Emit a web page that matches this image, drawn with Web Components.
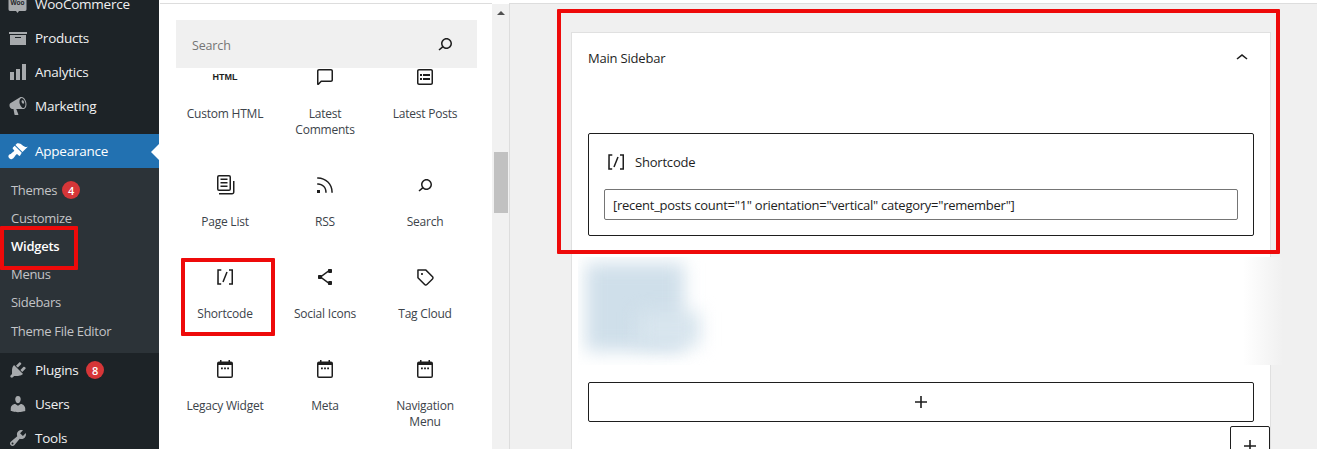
<!DOCTYPE html>
<html lang="en">
<head>
<meta charset="utf-8">
<title>Widgets</title>
<style>
  html, body { margin: 0; height: 449px; overflow: hidden; background: #fff; }
  body { font-family: "Open Sans", "Noto Sans", sans-serif; font-size: 13px; }
  wp-screen { display: flex; height: 449px; }
</style>
</head>
<body>
<template id="tpl-menu-row">
  <style>
    :host { display: flex; align-items: center; height: 34px; color: #f0f0f1; font-size: 13.5px; letter-spacing: -.25px; }
    :host([current]) { background: #2271b1; color: #fff; position: relative; }
    :host([current])::after { content: ""; position: absolute; right: 0; top: 10px; border: 8px solid transparent; border-right-color: #fff; border-left: 0; }
    .ic { width: 20px; height: 20px; margin: 0 7px 0 8px; flex: none; fill: #a7aaad; }
    :host([current]) .ic { fill: #fff; }
    ::slotted(svg) { width: 20px; height: 20px; fill: #a7aaad; }
    :host([current]) ::slotted(svg) { fill: #fff; }
  </style>
  <span class="ic"><slot name="icon"></slot></span><span><slot></slot></span>
</template>
<template id="tpl-badge">
  <style>
    :host { display: inline-flex; align-items: center; justify-content: center; width: 18px; height: 18px; border-radius: 50%; background: #d63638; color: #fff; font-size: 11px; font-weight: 600; letter-spacing: 0; }
  </style>
  <slot></slot>
</template>
<template id="tpl-sub-row">
  <style>
    :host { display: flex; align-items: center; height: 28px; padding-left: 11px; color: #c3c4c7; font-size: 13px; letter-spacing: -.3px; gap: 5px; }
    :host([current]) { color: #fff; font-weight: 600; letter-spacing: -.25px; }
  </style>
  <slot></slot>
</template>
<template id="tpl-sidebar">
  <style>
    :host { display: block; width: 159px; flex: none; background: #1d2327; height: 449px; overflow: hidden; margin-right: 1px; }
    .top { margin-top: -13px; }
    .gap { height: 11px; }
    .sub { background: #2c3338; padding: 8px 0; height: 169px; }
  </style>
  <div class="top"><slot name="top"></slot></div>
  <div class="gap"></div>
  <slot name="current"></slot>
  <div class="sub"><slot name="sub"></slot></div>
  <slot name="bottom"></slot>
</template>
<template id="tpl-search">
  <style>
    :host { display: flex; align-items: center; justify-content: space-between; height: 48px; background: #f0f0f0; padding: 0 20px 0 16px; color: #757575; font-size: 12.5px; letter-spacing: -.15px; position: relative; z-index: 1; }
    span { padding-top: 2px; }
    svg { width: 24px; height: 24px; fill: #1e1e1e; }
  </style>
  <span><slot></slot></span>
  <svg viewBox="0 0 24 24"><path d="M13.5 6C10.5 6 8 8.5 8 11.5c0 1.1.3 2.1.9 3l-3.4 3 1 1.1 3.4-2.9c1 .9 2.2 1.4 3.6 1.4 3 0 5.5-2.5 5.5-5.5C19 8.5 16.5 6 13.5 6zm0 9.5c-2.2 0-4-1.8-4-4s1.8-4 4-4 4 1.8 4 4-1.8 4-4 4z"/></svg>
</template>
<template id="tpl-block-item">
  <style>
    :host { display: flex; flex-direction: column; align-items: center; text-align: center; width: 100px; color: #1e1e1e; font-size: 12px; line-height: 16px; letter-spacing: -.22px; }
    .ic { height: 24px; width: 24px; margin-bottom: 17px; display: flex; align-items: center; justify-content: center; }
    ::slotted(svg) { width: 24px; height: 24px; fill: #1e1e1e; }
    .lb { color: #3c434a; width: 80px; }
  </style>
  <div class="ic"><slot name="icon"></slot></div>
  <div class="lb"><slot></slot></div>
</template>
<template id="tpl-inserter">
  <style>
    :host { display: flex; width: 332px; flex: none; height: 446px; margin-top: 3px; border-top: 1px solid #ddd; box-sizing: border-box; overflow: hidden; }
    .pane { width: 332px; padding: 16px 15px 0 16px; box-sizing: border-box; }
    .grid { display: grid; grid-template-columns: repeat(3, 100px); row-gap: 35px; margin: -3px 0 0 -1px; }
  </style>
  <div class="pane">
    <slot name="search"></slot>
    <div class="grid"><slot></slot></div>
  </div>
</template>
<template id="tpl-scrollbar">
  <style>
    :host { display: flex; flex-direction: column; align-items: center; width: 17px; flex: none; height: 445px; margin-top: 4px; background: #f1f1f1; }
    .arrow { margin-top: 7px; border: 4px solid transparent; border-top: 0; border-bottom: 4px solid #505050; }
    .thumb { width: 14px; height: 61px; background: #c1c1c1; margin-top: 137px; }
  </style>
  <div class="arrow"></div><div class="thumb"></div>
</template>
<template id="tpl-canvas">
  <style>
    :host { display: block; flex: 1; height: 446px; margin-top: 3px; background: #f0f0f0; border-top: 1px solid #ddd; border-left: 1px solid #ddd; box-sizing: border-box; padding: 28px 46px 0 61px; overflow: hidden; position: relative; }
  </style>
  <slot></slot>
</template>
<template id="tpl-area">
  <style>
    :host { display: block; position: relative; background: #fff; border: 1px solid #e0e0e0; padding: 0 16px; height: 500px; }
    header { display: flex; align-items: center; justify-content: space-between; height: 50px; color: #1e1e1e; font-size: 13px; letter-spacing: -.2px; margin-bottom: 50px; }
    svg { width: 24px; height: 24px; fill: #1e1e1e; }
  </style>
  <header><span><slot name="title"></slot></span><svg viewBox="0 0 24 24"><path d="M6.5 12.4L12 8l5.5 4.4-.9 1.2L12 10l-4.5 3.6-1-1.2z"/></svg></header>
  <slot></slot>
</template>
<template id="tpl-shortcode">
  <style>
    :host { display: block; border: 1px solid #1e1e1e; border-radius: 2px; height: 103px; box-sizing: border-box; padding: 16px 15px 0; color: #1e1e1e; }
    .head { display: flex; align-items: center; gap: 7px; height: 24px; margin-bottom: 15px; font-size: 13px; letter-spacing: -.2px; }
    svg { width: 24px; height: 24px; fill: #1e1e1e; }
    .field { border: 1px solid #757575; border-radius: 2px; height: 31px; box-sizing: border-box; display: flex; align-items: center; padding: 1px 0 0 8px; font-size: 13px; letter-spacing: -.26px; white-space: nowrap; }
  </style>
  <div class="head"><svg viewBox="0 0 24 24"><path d="M16 4.2v1.500h2.500v12.500H16v1.500h4V4.2h-4zM4.2 19.800h4v-1.500H5.800V5.800h2.500V4.200h-4l-.1 15.600zm5.100-3.100l1.400.6 4-10-1.400-.6-4 10z"/></svg><span><slot name="title"></slot></span></div>
  <div class="field"><slot></slot></div>
</template>
<template id="tpl-blurred">
  <style>
    :host { display: block; position: relative; height: 146px; }
    .fade { position: absolute; left: -10px; right: -29px; top: 21px; height: 108px; background: linear-gradient(to right, #fff calc(100% - 40px), #f0f0f0 100%); overflow: hidden; }
    .blob { position: absolute; left: 8px; top: 6px; width: 98px; height: 88px; background: #cfdfea; filter: blur(9px); }
    .blob2 { position: absolute; left: 60px; top: 55px; width: 62px; height: 34px; background: #d8e5ee; filter: blur(9px); }
  </style>
  <div class="fade"><div class="blob"></div><div class="blob2"></div></div>
</template>
<template id="tpl-appender">
  <style>
    :host { display: flex; align-items: center; justify-content: center; box-sizing: border-box; height: 40px; border: 1px solid #1e1e1e; border-radius: 2px; background: #fff; }
    svg { width: 24px; height: 24px; fill: #1e1e1e; }
  </style>
  <svg viewBox="0 0 24 24"><path d="M18 11.2h-5.2V6h-1.6v5.2H6v1.6h5.2V18h1.6v-5.2H18z"/></svg>
</template>
<template id="tpl-annotation">
  <style>
    :host { position: absolute; box-sizing: border-box; border: 4px solid #ee0a0a; border-radius: 1px; pointer-events: none; }
  </style>
</template>
<template id="tpl-screen">
  <style>
    :host { display: flex; height: 449px; position: relative; }
  </style>
  <slot></slot>
</template>

<wp-screen>
  <wp-sidebar>
    <menu-row slot="top"><svg slot="icon" viewBox="0 0 20 20"><path d="M2 0h15c1 0 1.500.9 1.500 2v13c0 1.100-.5 2-1.500 2h-6l-1.500 2-1.500-2H2c-1 0-1.500-.9-1.500-2V2C.5.900 1 0 2 0z"/><text x="9.500" y="11" text-anchor="middle" font-size="6.500" font-weight="700" font-family="'Liberation Sans',sans-serif" letter-spacing="0" fill="#1d2327">Woo</text></svg>WooCommerce</menu-row>
    <menu-row slot="top"><svg slot="icon" viewBox="0 0 20 20"><path d="M19 4v2H1V4h18zM2 7h16v10H2V7zm11 3V9H7v1h6z"/></svg>Products</menu-row>
    <menu-row slot="top"><svg slot="icon" viewBox="0 0 20 20"><path d="M18 18V2h-4v16h4zm-6 0V7H8v11h4zm-6 0v-8H2v8h4z"/></svg>Analytics</menu-row>
    <menu-row slot="top"><svg slot="icon" viewBox="0 0 20 20"><path d="M18.150 5.940c.46 1.620.38 3.220-.02 4.480-.42 1.280-1.260 2.180-2.300 2.480-.16.06-.26.06-.4.06-.06.02-.12.02-.18.02-.06.02-.14.02-.22.02h-6.800l2.220 5.500c.02.14-.06.26-.14.34-.08.1-.24.16-.34.16H6.950c-.1 0-.26-.06-.34-.16-.08-.08-.16-.2-.14-.34l-1-5.500H4.250l-.02-.02c-.5.06-1.080-.18-1.540-.62s-.88-1.080-1.060-1.880c-.24-.8-.2-1.560-.02-2.200.18-.62.58-1.080 1.060-1.300l.02-.02 9-5.400c.1-.06.18-.1.24-.16.06-.04.14-.08.24-.12.16-.08.28-.12.5-.18 1.040-.3 2.240.1 3.220 1 .98.88 1.800 2.240 2.260 3.860zm-2.580 5.980h-.02c.4-.1.74-.34 1.040-.7.58-.7.86-1.760.86-3.040-.02-.64-.1-1.300-.28-1.980-.34-1.360-1.020-2.500-1.780-3.240-.38-.38-.76-.64-1.140-.78-.18-.06-.36-.08-.54-.08-.14 0-.26 0-.38.04-.38.1-.72.34-1.020.7-.6.72-.88 1.740-.86 3.040 0 .64.08 1.300.28 1.980.34 1.340 1 2.480 1.780 3.240.38.36.76.64 1.140.78.18.06.36.1.52.1.14 0 .28 0 .4-.06zm.1-4.340c.26-.1.42-.42.46-.88.02-.46-.08-.96-.36-1.440-.26-.46-.64-.76-1.020-.92-.36-.12-.66-.1-.88.1-.2.18-.3.5-.3.92 0 .44.14.94.4 1.380.26.46.6.78.98.92.26.1.52.04.72-.08z"/></svg>Marketing</menu-row>
    <menu-row slot="current" current><svg slot="icon" viewBox="0 0 20 20"><path d="M14.480 11.060L7.410 3.990l1.500-1.500c.5-.56 2.300-.47 3.510.32 1.210.8 1.430 1.280 2.910 2.100 1.180.64 2.450 1.260 4.450.85zm-.71.71L6.700 4.700 4.930 6.470c-.39.39-.39 1.020 0 1.410l1.060 1.060c.39.39.39 1.030 0 1.420-.6.6-1.430 1.110-2.210 1.690-.35.26-.7.53-1.010.84C1.430 13.230.4 14.080.4 15.290c0 .15.01.3.04.46.1.6.4 1.150.84 1.570.42.42.97.74 1.570.84.16.03.31.04.46.04 1.210 0 2.060-1.030 2.400-1.430.31-.31.58-.66.84-1.010.58-.78 1.090-1.610 1.690-2.210.39-.39 1.030-.39 1.420 0l1.060 1.060c.39.39 1.020.39 1.410 0z"/></svg>Appearance</menu-row>
    <sub-row slot="sub">Themes <wp-badge>4</wp-badge></sub-row>
    <sub-row slot="sub">Customize</sub-row>
    <sub-row slot="sub" current>Widgets</sub-row>
    <sub-row slot="sub">Menus</sub-row>
    <sub-row slot="sub">Sidebars</sub-row>
    <sub-row slot="sub" style="margin-top:1px">Theme File Editor</sub-row>
    <menu-row slot="bottom"><svg slot="icon" viewBox="0 0 20 20"><path d="M13.110 4.360L9.870 7.600 8 5.730l3.240-3.240c.35-.34 1.050-.2 1.560.32.52.51.66 1.210.31 1.550zm-8 1.770l.91-1.120 9.010 9.010-1.190.84c-.71.71-2.630 1.160-3.820 1.160H6.140L4.900 17.260c-.59.59-1.540.59-2.120 0-.59-.58-.59-1.530 0-2.120l1.240-1.240v-3.880c0-1.130.4-3.190 1.090-3.890zm7.260 3.970l3.240-3.240c.34-.35 1.040-.21 1.550.31.52.51.66 1.210.31 1.550l-3.240 3.250z"/></svg>Plugins&nbsp;&nbsp;<wp-badge style="margin-left:1px">8</wp-badge></menu-row>
    <menu-row slot="bottom"><svg slot="icon" viewBox="0 0 20 20"><path d="M10 9.250c-2.270 0-2.730-3.440-2.730-3.440C7 4.020 7.820 2 9.970 2c2.160 0 2.980 2.020 2.710 3.810 0 0-.41 3.440-2.680 3.440zm0 2.570L12.720 10c2.390 0 4.520 2.330 4.520 4.530v2.490s-3.650 1.130-7.240 1.130c-3.650 0-7.240-1.130-7.240-1.130v-2.490c0-2.250 1.940-4.480 4.470-4.480z"/></svg>Users</menu-row>
    <menu-row slot="bottom"><svg slot="icon" viewBox="0 0 20 20"><path d="M16.680 9.770c-1.340 1.340-3.300 1.670-4.950.99l-5.410 6.520c-.99.99-2.590.99-3.580 0s-.99-2.590 0-3.570l6.520-5.420c-.68-1.650-.35-3.610.99-4.950 1.280-1.280 3.120-1.620 4.720-1.060l-2.890 2.890 2.820 2.820 2.860-2.870c.53 1.580.18 3.390-1.080 4.650zM3.810 16.210c.4.39 1.040.39 1.430 0 .4-.4.4-1.040 0-1.430-.39-.4-1.030-.4-1.430 0-.39.39-.39 1.030 0 1.430z"/></svg>Tools</menu-row>
  </wp-sidebar>
  <block-inserter>
    <inserter-search slot="search">Search</inserter-search>
    <block-item><span slot="icon" style="font:700 9px 'Liberation Sans',sans-serif;letter-spacing:0;color:#1e1e1e">HTML</span>Custom HTML</block-item>
    <block-item><svg slot="icon" viewBox="0 0 24 24"><path d="M18 4H6c-1.100 0-2 .9-2 2v12.900c0 .6.5 1.100 1.100 1.100.3 0 .5-.1.8-.3L8.500 17H18c1.100 0 2-.9 2-2V6c0-1.100-.9-2-2-2zm.5 11c0 .3-.2.5-.5.5H7.900l-2.400 2.400V6c0-.3.2-.5.5-.5h12c.3 0 .5.2.5.5v9z"/></svg>Latest Comments</block-item>
    <block-item><svg slot="icon" viewBox="0 0 24 24"><path d="M18 4H6c-1.100 0-2 .9-2 2v12c0 1.100.9 2 2 2h12c1.100 0 2-.9 2-2V6c0-1.100-.9-2-2-2zm.5 14c0 .3-.2.5-.5.5H6c-.3 0-.5-.2-.5-.5V6c0-.3.2-.5.5-.5h12c.3 0 .5.2.5.5v12zM7 11h2V9H7v2zm0 4h2v-2H7v2zm3-4h7V9h-7v2zm0 4h7v-2h-7v2z"/></svg>Latest Posts</block-item>
    <block-item><svg slot="icon" viewBox="0 0 24 24"><path d="M14.500 5.500h-7V7h7V5.500ZM7.500 9h7v1.500h-7V9Zm7 3.500h-7V14h7v-1.500Z"/><path d="M16 2H6a2 2 0 0 0-2 2v12a2 2 0 0 0 2 2h10a2 2 0 0 0 2-2V4a2 2 0 0 0-2-2ZM6 3.500h10a.5.5 0 0 1 .5.5v12a.5.5 0 0 1-.5.5H6a.5.5 0 0 1-.5-.5V4a.5.5 0 0 1 .5-.5Z"/><path d="M20 8v11c0 .69-.31 1-.999 1H6v1.500h13.001c1.520 0 2.499-.982 2.499-2.500V8H20Z"/></svg>Page List</block-item>
    <block-item><svg slot="icon" viewBox="0 0 24 24"><path d="M5 10.200h-.8v1.500H5c1.900 0 3.800.8 5.100 2.100 1.400 1.400 2.100 3.200 2.100 5.100v.8h1.500V19c0-2.300-.9-4.500-2.600-6.200-1.600-1.600-3.800-2.600-6.100-2.600zm10.400-1.600C12.600 5.800 8.900 4.200 5 4.200h-.8v1.500H5c3.500 0 6.900 1.400 9.400 3.900s3.900 5.800 3.900 9.400v.8h1.500V19c0-3.900-1.600-7.600-4.400-10.400zM4 20h3v-3H4v3z"/></svg>RSS</block-item>
    <block-item><svg slot="icon" viewBox="0 0 24 24"><path d="M13.500 6C10.500 6 8 8.500 8 11.500c0 1.100.3 2.100.9 3l-3.400 3 1 1.100 3.400-2.900c1 .9 2.200 1.400 3.600 1.400 3 0 5.500-2.500 5.500-5.500C19 8.500 16.500 6 13.500 6zm0 9.500c-2.200 0-4-1.800-4-4s1.800-4 4-4 4 1.800 4 4-1.800 4-4 4z"/></svg>Search</block-item>
    <block-item><svg slot="icon" viewBox="0 0 24 24"><path d="M16 4.200v1.500h2.500v12.500H16v1.500h4V4.200h-4zM4.200 19.800h4v-1.500H5.800V5.800h2.500V4.200h-4l-.1 15.600zm5.100-3.100l1.400.6 4-10-1.400-.6-4 10z"/></svg>Shortcode</block-item>
    <block-item><svg slot="icon" viewBox="0 0 24 24"><path d="M9 11.800l6.100-4.500c.1.4.4.7.9.7h2c.6 0 1-.4 1-1V5c0-.6-.4-1-1-1h-2c-.6 0-1 .4-1 1v.4l-6.400 4.800c-.2-.1-.4-.2-.6-.2H6c-.6 0-1 .4-1 1v2c0 .6.4 1 1 1h2c.2 0 .4-.1.6-.2l6.400 4.800v.4c0 .6.4 1 1 1h2c.6 0 1-.4 1-1v-2c0-.6-.4-1-1-1h-2c-.5 0-.8.3-.9.7L9 12.200v-.4z"/></svg>Social Icons</block-item>
    <block-item><svg slot="icon" viewBox="0 0 24 24"><path d="M20.100 11.200l-6.700-6.700c-.1-.1-.3-.2-.5-.2H5c-.4-.1-.8.3-.8.7v7.800c0 .2.1.4.2.5l6.700 6.700c.2.2.5.4.7.5s.6.2.9.2c.3 0 .6-.1.9-.2.3-.1.5-.3.8-.5l5.600-5.600c.4-.4.7-1 .7-1.600.1-.6-.2-1.200-.6-1.600zM19 13.400L13.400 19c-.1.1-.2.1-.3.2-.2.1-.4.1-.6 0-.1 0-.2-.1-.3-.2l-6.500-6.500V5.800h6.800l6.500 6.500c.2.2.2.4.2.6 0 .1 0 .3-.2.5zM9 8c-.6 0-1 .4-1 1s.4 1 1 1 1-.4 1-1-.4-1-1-1z"/></svg>Tag Cloud</block-item>
    <block-item><svg slot="icon" viewBox="0 0 24 24"><path fill-rule="evenodd" d="M7 3h1.500v1.500h7V3H17v1.500h1a2 2 0 0 1 2 2V19a2 2 0 0 1-2 2H6a2 2 0 0 1-2-2V6.500a2 2 0 0 1 2-2h1V3zM5.500 8v11a.5.5 0 0 0 .5.5h12a.5.5 0 0 0 .5-.5V8h-13z"/><path d="M8 10.500h1.800v1.800H8zM11.100 10.500h1.800v1.800h-1.800zM14.200 10.500H16v1.800h-1.800z"/></svg>Legacy Widget</block-item>
    <block-item><svg slot="icon" viewBox="0 0 24 24"><path fill-rule="evenodd" d="M7 3h1.500v1.500h7V3H17v1.500h1a2 2 0 0 1 2 2V19a2 2 0 0 1-2 2H6a2 2 0 0 1-2-2V6.500a2 2 0 0 1 2-2h1V3zM5.500 8v11a.5.5 0 0 0 .5.5h12a.5.5 0 0 0 .5-.5V8h-13z"/><path d="M8 10.500h1.800v1.800H8zM11.100 10.500h1.800v1.800h-1.800zM14.200 10.500H16v1.800h-1.800z"/></svg>Meta</block-item>
    <block-item><svg slot="icon" viewBox="0 0 24 24"><path fill-rule="evenodd" d="M7 3h1.500v1.500h7V3H17v1.500h1a2 2 0 0 1 2 2V19a2 2 0 0 1-2 2H6a2 2 0 0 1-2-2V6.500a2 2 0 0 1 2-2h1V3zM5.500 8v11a.5.5 0 0 0 .5.5h12a.5.5 0 0 0 .5-.5V8h-13z"/><path d="M8 10.500h1.800v1.800H8zM11.100 10.500h1.800v1.800h-1.800zM14.200 10.500H16v1.800h-1.800z"/></svg>Navigation Menu</block-item>
  </block-inserter>
  <fake-scrollbar></fake-scrollbar>
  <editor-canvas>
    <widget-area>
      <span slot="title">Main Sidebar</span>
      <shortcode-block><span slot="title">Shortcode</span>[recent_posts count="1" orientation="vertical" category="remember"]</shortcode-block>
      <blurred-block></blurred-block>
      <block-appender></block-appender>
      <block-appender style="width:40px;margin:4px -16px 0 auto"></block-appender>
    </widget-area>
  </editor-canvas>
  <red-annotation style="left:0;top:226px;width:78px;height:44px"></red-annotation>
  <red-annotation style="left:181px;top:258px;width:94px;height:78px"></red-annotation>
  <red-annotation style="left:557px;top:9px;width:723px;height:245px"></red-annotation>
</wp-screen>
<script>
  const make = (name, id) => customElements.define(name, class extends HTMLElement {
    constructor() {
      super();
      this.root = this.attachShadow({mode: 'open'});
      this.root.appendChild(document.getElementById(id).content.cloneNode(true));
    }
  });
  make('wp-screen', 'tpl-screen');
  make('wp-sidebar', 'tpl-sidebar');
  make('menu-row', 'tpl-menu-row');
  make('sub-row', 'tpl-sub-row');
  make('wp-badge', 'tpl-badge');
  make('block-inserter', 'tpl-inserter');
  make('inserter-search', 'tpl-search');
  make('block-item', 'tpl-block-item');
  make('fake-scrollbar', 'tpl-scrollbar');
  make('editor-canvas', 'tpl-canvas');
  make('widget-area', 'tpl-area');
  make('shortcode-block', 'tpl-shortcode');
  make('blurred-block', 'tpl-blurred');
  make('block-appender', 'tpl-appender');
  make('red-annotation', 'tpl-annotation');
</script>
</body>
</html>
